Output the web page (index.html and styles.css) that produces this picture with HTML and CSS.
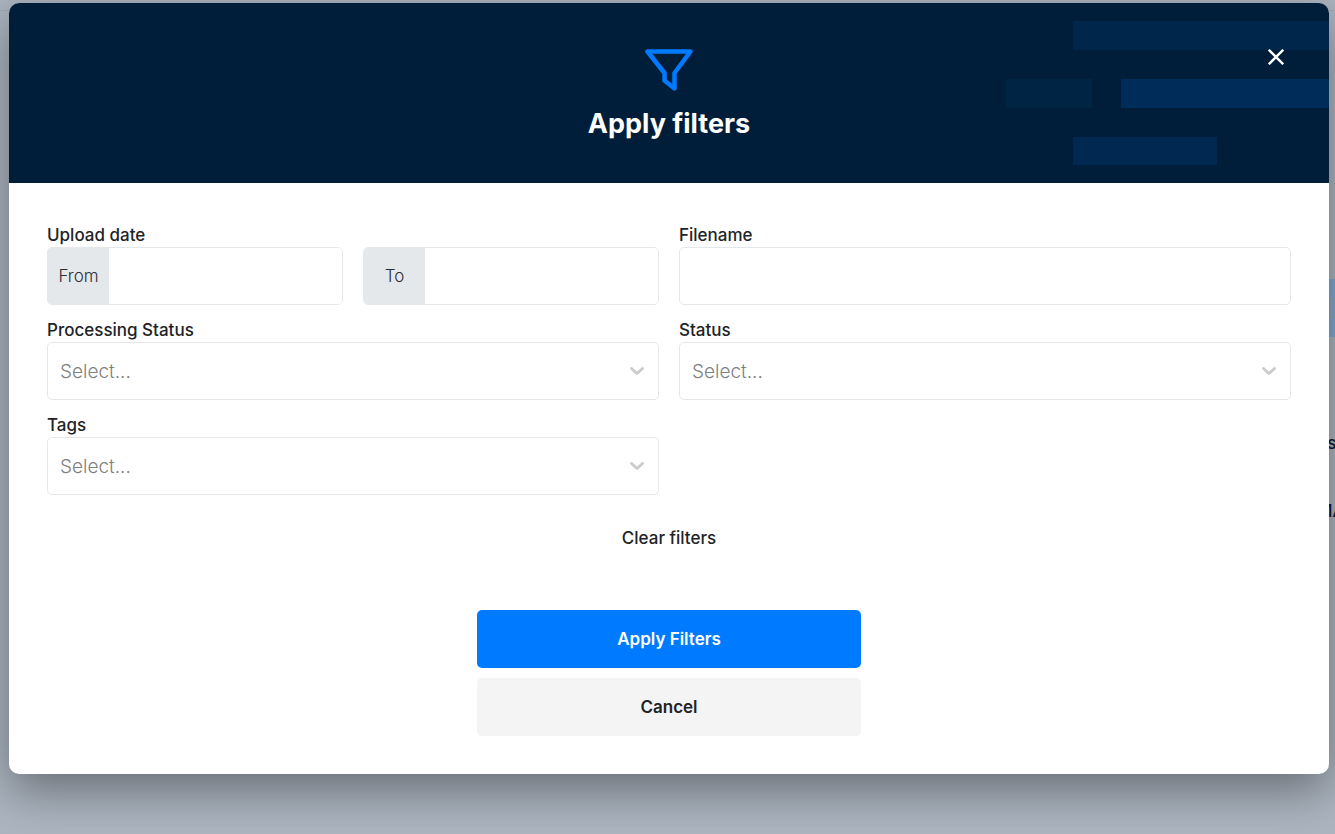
FILE: index.html
```
<!DOCTYPE html>
<html lang="en">
<head>
    <meta charset="UTF-8">
    <meta name="viewport" content="width=device-width, initial-scale=1.0">
    <title>Apply filters</title>
    <link rel="stylesheet" href="styles.css">
</head>
<body>
    <!-- Page behind the modal -->
    <div class="page" aria-hidden="true">
        <div class="page-topbar"></div>
        <div class="page-side">
            <div class="page-action">
                <svg width="16" height="22" viewBox="0 0 16 22" fill="none" stroke="#94a8bd" stroke-width="2"><path d="M2 1v20l14-8V9z"/></svg>
            </div>
            <div class="page-heading">us</div>
            <div class="page-cell">MA</div>
        </div>
    </div>

    <div class="modal" role="dialog" aria-labelledby="modal-title">
        <header class="modal-header">
            <svg class="header-pattern" width="323" height="180" viewBox="0 0 323 180">
                <rect x="67" y="18" width="256" height="29" fill="#00274b"/>
                <rect x="0" y="76" width="86" height="29" fill="#002444"/>
                <rect x="115" y="76" width="208" height="29" fill="#002c59"/>
                <rect x="67" y="134" width="144" height="28" fill="#002850"/>
            </svg>
            <svg width="48" height="44" viewBox="0 0 48 44" fill="none" stroke="#007bff" stroke-width="4.500" stroke-linejoin="round"><path d="M2.500 3.500h43L29.500 25v15.500L19.500 32.500V25z"/></svg>
            <h1 id="modal-title">Apply filters</h1>
            <button type="button" class="close" aria-label="Close">
                <svg width="16" height="16" viewBox="0 0 16 16" stroke="#fff" stroke-width="2.400"><path d="M.8.8l14.400 14.400M15.200.8L.8 15.200"/></svg>
            </button>
        </header>

        <form class="modal-body">
            <div class="fields">
                <fieldset class="field">
                    <legend>Upload date</legend>
                    <div class="date-range">
                        <div class="date-input">
                            <label for="date-from">From</label>
                            <input type="text" id="date-from">
                        </div>
                        <div class="date-input">
                            <label for="date-to">To</label>
                            <input type="text" id="date-to">
                        </div>
                    </div>
                </fieldset>

                <div class="field">
                    <label for="filename">Filename</label>
                    <input type="text" id="filename" class="control">
                </div>

                <div class="field">
                    <label for="processing-status">Processing Status</label>
                    <div class="select">
                        <select id="processing-status" class="control"><option>Select...</option></select>
                        <svg class="chevron" width="16" height="10" viewBox="0 0 16 10"><path d="M2.500 2.500L8 7.500l5.500-5"/></svg>
                    </div>
                </div>

                <div class="field">
                    <label for="status">Status</label>
                    <div class="select">
                        <select id="status" class="control"><option>Select...</option></select>
                        <svg class="chevron" width="16" height="10" viewBox="0 0 16 10"><path d="M2.500 2.500L8 7.500l5.500-5"/></svg>
                    </div>
                </div>

                <div class="field">
                    <label for="tags">Tags</label>
                    <div class="select">
                        <select id="tags" class="control"><option>Select...</option></select>
                        <svg class="chevron" width="16" height="10" viewBox="0 0 16 10"><path d="M2.500 2.500L8 7.500l5.500-5"/></svg>
                    </div>
                </div>
            </div>

            <button type="reset" class="clear">Clear filters</button>

            <div class="actions">
                <button type="submit" class="btn btn-primary">Apply Filters</button>
                <button type="button" class="btn btn-secondary">Cancel</button>
            </div>
        </form>
    </div>
</body>
</html>
```
FILE: styles.css
```
* {
    box-sizing: border-box;
}

body {
    margin: 0;
    padding: 3px 6px 60px 9px;
    min-height: 100vh;
    font-family: Inter, "Liberation Sans", sans-serif;
    font-size: 17px;
    color: #212326;
    background-color: #acb5c0;
}

button, input, select {
    font: inherit;
    color: inherit;
}

button {
    border: none;
    cursor: pointer;
}

/* Page behind the modal */
.page {
    position: absolute;
    inset: 0;
    overflow: hidden;
    color: #0a1a33;
    font-weight: 500;
    line-height: 24px;
}

.page-topbar {
    height: 11px;
    border-bottom: 1px solid #a0a9b3;
}

.page-side {
    width: 18px;
    margin-left: auto;
    padding-top: 268px;
}

.page-action {
    display: flex;
    align-items: center;
    justify-content: flex-end;
    height: 58px;
    margin-bottom: 94px;
    background-color: #86a9d0;
}

.page-action svg {
    flex-shrink: 0;
    margin-right: -11px;
}

.page-heading {
    margin-bottom: 44px;
}

/* Modal */
.modal {
    position: relative;
    border-radius: 10px;
    background-color: #fff;
    box-shadow: 0 16px 48px rgba(0, 0, 0, 0.4);
    overflow: hidden;
}

.modal-header {
    position: relative;
    display: flex;
    flex-direction: column;
    align-items: center;
    height: 180px;
    padding-top: 45px;
    background-color: #001e3a;
    color: #fff;
}

.header-pattern {
    position: absolute;
    top: 0;
    right: 0;
}

.modal-header h1 {
    margin: 14px 0 0;
    font-size: 27px;
    font-weight: 700;
    line-height: 36px;
}

.close {
    position: absolute;
    top: 38px;
    right: 37px;
    display: flex;
    align-items: center;
    justify-content: center;
    width: 32px;
    height: 32px;
    padding: 0;
    background: none;
}

.modal-body {
    display: flex;
    flex-direction: column;
    align-items: center;
    padding: 40px 38px 38px;
}

.fields {
    display: grid;
    grid-template-columns: 1fr 1fr;
    gap: 13px 20px;
    width: 100%;
}

.field {
    min-width: 0;
    margin: 0;
    padding: 0;
    border: none;
}

.field > label,
.field > legend {
    display: block;
    padding: 0;
    font-weight: 500;
    line-height: 24px;
}

.control,
.date-input {
    display: block;
    width: 100%;
    height: 58px;
    border: 1px solid #e4e8eb;
    border-radius: 5px;
    background-color: #fff;
}

.control {
    padding: 0 12px;
}

.date-range {
    display: flex;
    gap: 20px;
}

.date-input {
    display: flex;
    overflow: hidden;
}

.date-input label {
    flex: 0 0 61px;
    background-color: #e4e8eb;
    color: #2c2f32;
    font-weight: 300;
    line-height: 56px;
    text-align: center;
}

.date-input input {
    flex: 1;
    min-width: 0;
    border: none;
    padding: 0 12px;
}

.select {
    position: relative;
}

.select select {
    appearance: none;
    color: #808080;
    font-size: 19px;
    font-weight: 300;
}

.chevron {
    position: absolute;
    top: 24px;
    right: 14px;
    fill: none;
    stroke: #ccc;
    stroke-width: 3;
    stroke-linecap: round;
    stroke-linejoin: round;
    pointer-events: none;
}

.clear {
    margin-top: 31px;
    padding: 0;
    background: none;
    font-weight: 500;
    line-height: 24px;
}

.actions {
    display: flex;
    flex-direction: column;
    gap: 10px;
    width: 384px;
    max-width: 100%;
    margin-top: 60px;
}

.btn {
    height: 58px;
    border-radius: 5px;
    font-weight: 600;
}

.btn-primary {
    background-color: #007bff;
    color: #fff;
}

.btn-secondary {
    background-color: #f4f4f4;
}

@media (max-width: 700px) {
    .fields {
        grid-template-columns: 1fr;
    }
}
```
